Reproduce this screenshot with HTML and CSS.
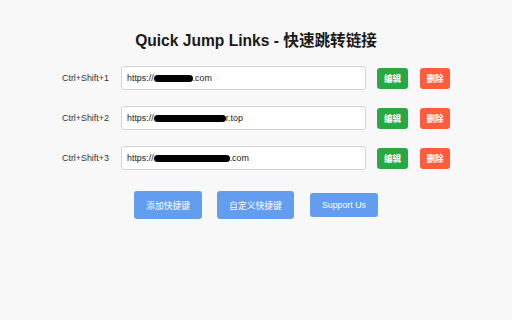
FILE: index.html
```html
<!DOCTYPE html>
<html lang="zh">
<head>
<meta charset="utf-8">
<title>Quick Jump Links</title>
<link rel="stylesheet" href="styles.css">
</head>
<body>
<main class="page">
  <h1 class="title">Quick Jump Links - 快速跳转链接</h1>
  <div class="rows">
    <div class="row">
      <span class="key">Ctrl+Shift+1</span>
      <div class="url">https://<span class="blob b1"></span>.com</div>
      <button class="btn edit">编辑</button>
      <button class="btn del">删除</button>
    </div>
    <div class="row">
      <span class="key">Ctrl+Shift+2</span>
      <div class="url">https://<span class="blob b2"></span>r.top</div>
      <button class="btn edit">编辑</button>
      <button class="btn del">删除</button>
    </div>
    <div class="row">
      <span class="key">Ctrl+Shift+3</span>
      <div class="url">https://<span class="blob b3"></span>.com</div>
      <button class="btn edit">编辑</button>
      <button class="btn del">删除</button>
    </div>
  </div>
  <div class="actions">
    <button class="action">添加快捷键</button>
    <button class="action">自定义快捷键</button>
    <button class="action small">Support Us</button>
  </div>
</main>
</body>
</html>
```
FILE: styles.css
```css
html, body {
  margin: 0;
  padding: 0;
  background: #f8f8f8;
  font-family: "Liberation Sans", Arial, "Noto Sans CJK SC", sans-serif;
}
.page {
  display: flex;
  flex-direction: column;
  align-items: center;
  padding-top: 32px;
  width: 512px;
  height: 320px;
  box-sizing: border-box;
}
.title {
  margin: 0;
  font-size: 15.6px;
  line-height: 18px;
  font-weight: bold;
  color: #1a1a1a;
}
.rows {
  margin-top: 16px;
  display: flex;
  flex-direction: column;
  gap: 16px;
}
.row {
  display: flex;
  align-items: center;
  height: 24px;
}
.key {
  width: 47px;
  margin-right: 12px;
  font-size: 8.9px;
  color: #333;
  white-space: nowrap;
}
.url {
  width: 245px;
  height: 24px;
  box-sizing: border-box;
  border: 1px solid #d4d4d4;
  border-radius: 3px;
  background: #fff;
  padding-left: 5px;
  display: flex;
  align-items: center;
  font-size: 8.9px;
  color: #222;
  margin-right: 11px;
}
.blob {
  display: inline-block;
  height: 7px;
  background: #000;
  border-radius: 4px;
}
.b1 { width: 39px; }
.b2 { width: 72px; }
.b3 { width: 76px; }
.btn {
  border: none;
  border-radius: 3px;
  height: 21px;
  width: 31px;
  padding: 0;
  color: #fff;
  font-family: "Liberation Sans", "Noto Sans CJK SC", sans-serif;
  font-size: 8.6px;
  font-weight: bold;
}
.edit { background: #28a745; margin-right: 12px; }
.del { background: #ff5c3d; width: 30px; }
.actions {
  margin-top: 21px;
  display: flex;
  align-items: center;
  gap: 15px;
}
.action {
  border: none;
  border-radius: 3px;
  background: #629def;
  color: #fff;
  height: 28px;
  padding: 0 12px;
  font-family: "Liberation Sans", "Noto Sans CJK SC", sans-serif;
  font-size: 8.8px;
}
.action.small {
  height: 24px;
  margin-left: 1px;
}
```
